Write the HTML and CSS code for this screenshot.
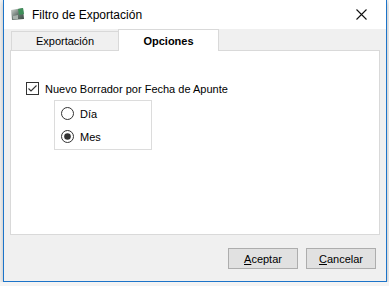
FILE: index.html
```html
<!DOCTYPE html>
<html lang="es">
<head>
    <meta charset="UTF-8" />
    <meta name="viewport" content="width=device-width, initial-scale=1" />
    <title>Filtro de Exportación</title>
    <link rel="stylesheet" href="styles.css">
</head>
<body>
    <div class="window">
        <div class="titlebar">
            <svg class="app-icon" width="15" height="14" viewBox="0 0 15 14">
                <defs>
                    <linearGradient id="g1" x1="0" y1="0" x2="1" y2="1">
                        <stop offset="0" stop-color="#d8dcd8"/>
                        <stop offset="0.5" stop-color="#6d7a74"/>
                        <stop offset="1" stop-color="#3c4a44"/>
                    </linearGradient>
                </defs>
                <path d="M1 3 L13 1 L14 12 L2 13 Z" fill="url(#g1)"/>
                <path d="M8 2 L13 1 L14 7 L9 8 Z" fill="#3f8f5a"/>
                <path d="M3 9 L8 8 L8 12 L3 12 Z" fill="#a8b2ac"/>
            </svg>
            <span class="title">Filtro de Exportación</span>
            <svg class="close" width="11" height="11" viewBox="0 0 11 11">
                <path d="M0.5 0.5 L10.5 10.5 M10.5 0.5 L0.5 10.5" stroke="#111" stroke-width="1.1"/>
            </svg>
        </div>

        <div class="client">
            <div class="tabs">
                <div class="tab">Exportación</div>
                <div class="tab active">Opciones</div>
            </div>

            <div class="panel">
                <div class="check-row">
                    <svg class="box" width="13" height="13" viewBox="0 0 13 13">
                        <rect x="0.5" y="0.5" width="12" height="12" fill="#fff" stroke="#333"/>
                        <path d="M2.5 6.5 L5 9 L10.5 3.5" fill="none" stroke="#333" stroke-width="1.1"/>
                    </svg>
                    <span>Nuevo Borrador por Fecha de Apunte</span>
                </div>

                <div class="group">
                    <div class="radio-row">
                        <svg class="radio" width="13" height="13" viewBox="0 0 13 13">
                            <circle cx="6.5" cy="6.5" r="6" fill="#fff" stroke="#333"/>
                        </svg>
                        <span>Día</span>
                    </div>
                    <div class="radio-row">
                        <svg class="radio" width="13" height="13" viewBox="0 0 13 13">
                            <circle cx="6.5" cy="6.5" r="6" fill="#fff" stroke="#333"/>
                            <circle cx="6.5" cy="6.5" r="3.3" fill="#333"/>
                        </svg>
                        <span>Mes</span>
                    </div>
                </div>
            </div>

            <div class="buttons">
                <button class="btn"><u>A</u>ceptar</button>
                <button class="btn"><u>C</u>ancelar</button>
            </div>
        </div>
    </div>
</body>
</html>
```

FILE: styles.css
```css
* {
    box-sizing: border-box;
}
body {
    margin: 0;
    background: #f4f4f4;
    font-family: "Liberation Sans", Arial, sans-serif;
    font-size: 11px;
    color: #000;
}
.window {
    margin-left: 3px;
    width: 384px;
    height: 282px;
    border: 1px solid #1c74c9;
    border-top: none;
    background: #f0f0f0;
    box-shadow: 0 2px 5px rgba(0, 0, 0, 0.25);
}
.titlebar {
    height: 29px;
    background: #fff;
    display: flex;
    align-items: center;
}
.app-icon {
    margin-left: 6px;
    margin-top: -2px;
}
.title {
    margin-left: 7px;
    font-size: 12px;
    flex: 1;
}
.close {
    margin-right: 19px;
    margin-top: -1px;
}
.tabs {
    display: flex;
    align-items: flex-end;
    height: 22px;
    margin-bottom: -1px;
    padding-left: 7px;
}
.tab {
    width: 107px;
    height: 20px;
    border: 1px solid #d9d9d9;
    border-right: none;
    background: #f0f0f0;
    text-align: center;
    line-height: 19px;
}
.tab.active {
    position: relative;
    width: 101px;
    height: 22px;
    border-right: 1px solid #d9d9d9;
    border-bottom: none;
    background: #fff;
    font-weight: bold;
    line-height: 22px;
}
.panel {
    margin-left: 6px;
    width: 370px;
    height: 185px;
    border: 1px solid #d9d9d9;
    background: #fff;
    padding: 31px 0 0 15px;
}
.check-row {
    display: flex;
    align-items: center;
    gap: 6px;
    height: 13px;
}
.group {
    margin: 5px 0 0 28px;
    width: 98px;
    height: 50px;
    border: 1px solid #dcdcdc;
    padding: 6px 0 0 6px;
    display: flex;
    flex-direction: column;
    gap: 10px;
}
.radio-row {
    display: flex;
    align-items: center;
    gap: 6px;
    height: 13px;
}
.buttons {
    display: flex;
    justify-content: flex-end;
    gap: 8px;
    margin-top: 13px;
    padding-right: 10px;
}
.btn {
    width: 70px;
    height: 21px;
    border: 1px solid #adadad;
    background: #e1e1e1;
    font-family: "Liberation Sans", Arial, sans-serif;
    font-size: 11px;
    padding: 0;
}
```
